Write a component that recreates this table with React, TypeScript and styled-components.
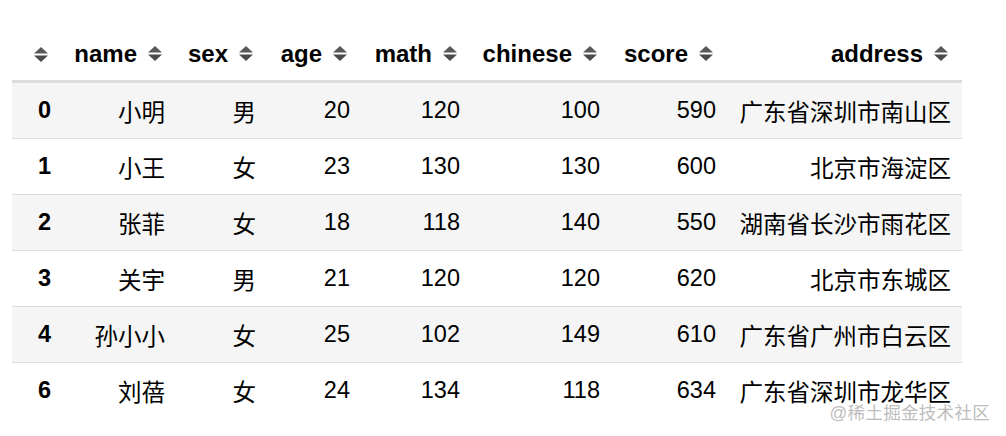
import React from "react";
import styled, { createGlobalStyle } from "styled-components";

const GlobalStyle = createGlobalStyle`
  *, *::before, *::after { box-sizing: border-box; }
  html, body { margin: 0; padding: 0; background: #ffffff; }
  body {
    font-family: "Liberation Sans", Arial, "Noto Sans CJK SC", sans-serif;
    color: #000;
  }
`;

const Page = styled.div`
  position: relative;
  width: 1006px;
  height: 436px;
  padding: 27px 0 0 12px;
  overflow: hidden;
`;

const Table = styled.table`
  width: 950px;
  table-layout: fixed;
  border-collapse: separate;
  border-spacing: 0;
  font-family: "Liberation Sans", Arial, "Noto Sans CJK SC", sans-serif;
`;

const HeadCell = styled.th`
  height: 56px;
  padding: 0 14px 0 0;
  text-align: right;
  white-space: nowrap;
  font-size: 24px;
  font-weight: 700;
  color: #000;
  border-bottom: 3px solid #dddddd;
  vertical-align: middle;
`;

const HeadInner = styled.span`
  display: inline-flex;
  align-items: center;
  gap: 11px;
`;

const Row = styled.tr<{ $striped: boolean }>`
  background: ${(p) => (p.$striped ? "#f5f5f5" : "#ffffff")};
`;

const Cell = styled.td<{ $last: boolean; $bold?: boolean }>`
  height: ${(p) => (p.$last ? "55px" : "56px")};
  padding: 0 11px 0 0;
  text-align: right;
  white-space: nowrap;
  font-size: 23.5px;
  font-weight: ${(p) => (p.$bold ? 700 : 400)};
  color: #000;
  border-bottom: ${(p) => (p.$last ? "none" : "1px solid #dddddd")};
  vertical-align: middle;
`;

const Watermark = styled.div`
  position: absolute;
  right: 16px;
  bottom: 13px;
  font-size: 17.5px;
  line-height: 20px;
  color: #bdbdbd;
  letter-spacing: 0.3px;
  font-family: "Liberation Sans", "Noto Sans CJK SC", sans-serif;
`;

const SortIcon = () => (
  <svg width="14" height="15" viewBox="0 0 14 15" aria-hidden="true">
    <polygon points="7,0 14,6.6 0,6.6" fill="#585858" />
    <polygon points="0,8.4 14,8.4 7,15" fill="#4a4a4a" />
  </svg>
);

const columns: { key: string; label: string; width: number }[] = [
  { key: "idx", label: "", width: 50 },
  { key: "name", label: "name", width: 114 },
  { key: "sex", label: "sex", width: 91 },
  { key: "age", label: "age", width: 94 },
  { key: "math", label: "math", width: 110 },
  { key: "chinese", label: "chinese", width: 140 },
  { key: "score", label: "score", width: 116 },
  { key: "address", label: "address", width: 235 },
];

const rows = [
  ["0", "小明", "男", "20", "120", "100", "590", "广东省深圳市南山区"],
  ["1", "小王", "女", "23", "130", "130", "600", "北京市海淀区"],
  ["2", "张菲", "女", "18", "118", "140", "550", "湖南省长沙市雨花区"],
  ["3", "关宇", "男", "21", "120", "120", "620", "北京市东城区"],
  ["4", "孙小小", "女", "25", "102", "149", "610", "广东省广州市白云区"],
  ["6", "刘蓓", "女", "24", "134", "118", "634", "广东省深圳市龙华区"],
];

export default function App() {
  return (
    <>
      <GlobalStyle />
      <Page>
        <Table>
          <colgroup>
            {columns.map((c) => (
              <col key={c.key} style={{ width: c.width }} />
            ))}
          </colgroup>
          <thead>
            <tr>
              {columns.map((c) => (
                <HeadCell key={c.key}>
                  <HeadInner>
                    {c.label && <span>{c.label}</span>}
                    <SortIcon />
                  </HeadInner>
                </HeadCell>
              ))}
            </tr>
          </thead>
          <tbody>
            {rows.map((r, i) => (
              <Row key={r[0]} $striped={i % 2 === 0}>
                {r.map((v, j) => (
                  <Cell key={j} $last={i === rows.length - 1} $bold={j === 0}>
                    {v}
                  </Cell>
                ))}
              </Row>
            ))}
          </tbody>
        </Table>
        <Watermark>@稀土掘金技术社区</Watermark>
      </Page>
    </>
  );
}
